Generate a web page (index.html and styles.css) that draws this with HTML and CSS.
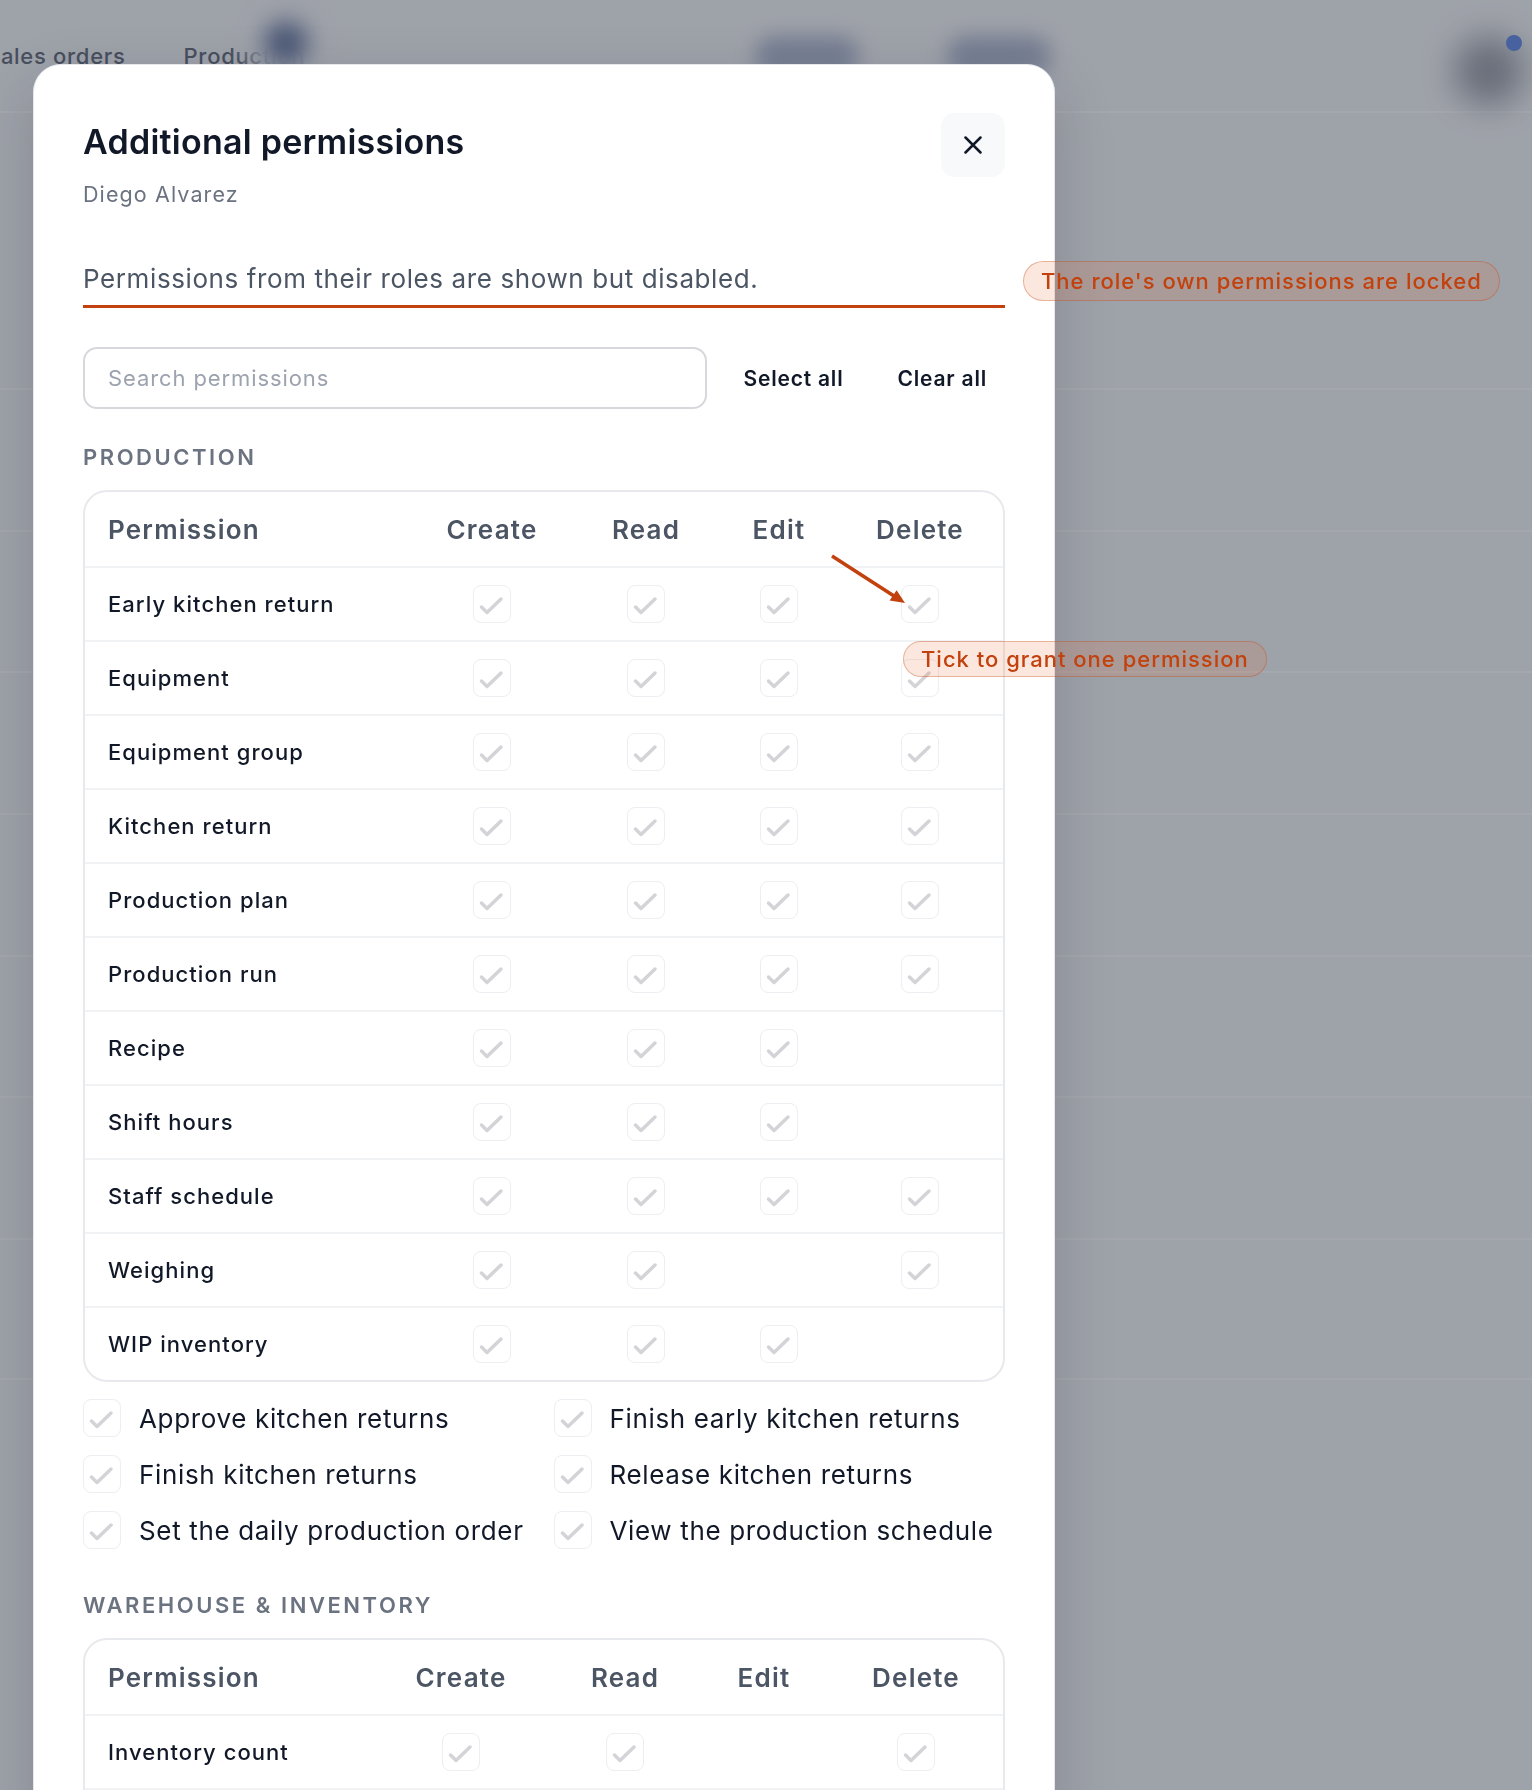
FILE: index.html
```html
<!DOCTYPE html>
<html lang="en">
<head>
  <meta charset="UTF-8" />
  <meta name="viewport" content="width=device-width, initial-scale=1.0"/>
  <title>Additional permissions</title>
  <link rel="stylesheet" href="styles.css">
</head>
<body>
  <!-- page behind the dialog, dimmed by the overlay -->
  <div class="app">
    <nav class="app-nav">
      <span class="nav-link first">Sales orders</span>
      <span class="nav-link">Production</span>
      <span class="ghost ghost-pop"></span>
      <span class="ghost ghost-btn one"></span>
      <span class="ghost ghost-btn two"></span>
      <span class="nav-user"><span class="ghost ghost-avatar"></span><span class="dot"></span></span>
    </nav>
    <div class="app-list">
      <div class="app-row"></div>
      <div class="app-row"></div>
      <div class="app-row"></div>
      <div class="app-row"></div>
      <div class="app-row"></div>
      <div class="app-row"></div>
      <div class="app-row"></div>
    </div>
  </div>

  <div class="overlay">
    <div class="modal">
      <div class="modal-head">
        <div>
          <h2 class="modal-title">Additional permissions</h2>
          <p class="modal-sub">Diego Alvarez</p>
        </div>
        <button class="close-btn" aria-label="Close">
          <svg width="18" height="18" viewBox="0 0 18 18"><path d="M1.5 1.5L16.5 16.5M16.5 1.5L1.5 16.5"/></svg>
        </button>
      </div>

      <p class="modal-note">Permissions from their roles are shown but disabled.</p>

      <div class="toolbar">
        <input class="search" type="text" placeholder="Search permissions">
        <button class="link-btn">Select all</button>
        <button class="link-btn">Clear all</button>
      </div>

      <h3 class="group-title">Production</h3>
      <div class="perm-table cols-a" id="production-table"></div>
      <div class="extra-list" id="production-extra"></div>

      <h3 class="group-title">Warehouse &amp; inventory</h3>
      <div class="perm-table cols-b" id="warehouse-table"></div>
    </div>

    <span class="hint hint-locked">The role's own permissions are locked</span>
    <svg class="hint-arrow" width="90" height="60" viewBox="0 0 90 60">
      <path class="arrow-line" d="M6 6L68 46"/>
      <path class="arrow-head" d="M79 53L63.6 50.6L70.6 40.2Z"/>
    </svg>
    <span class="hint hint-tick">Tick to grant one permission</span>
  </div>

  <script>
    const production = [
      ['Early kitchen return', 'CRED'],
      ['Equipment', 'CRED'],
      ['Equipment group', 'CRED'],
      ['Kitchen return', 'CRED'],
      ['Production plan', 'CRED'],
      ['Production run', 'CRED'],
      ['Recipe', 'CRE'],
      ['Shift hours', 'CRE'],
      ['Staff schedule', 'CRED'],
      ['Weighing', 'CRD'],
      ['WIP inventory', 'CRE']
    ];
    const productionExtra = [
      'Approve kitchen returns', 'Finish early kitchen returns',
      'Finish kitchen returns', 'Release kitchen returns',
      'Set the daily production order', 'View the production schedule'
    ];
    const warehouse = [
      ['Inventory count', 'CRD'],
      ['Stock transfer', 'CRED']
    ];

    function checkBox(){
      return '<span class="check"><svg width="35" height="35" viewBox="0 0 35 35"><path d="M7.5 21l5.5 5.5L27 13"/></svg></span>';
    }

    function renderTable(id, rows){
      const head = `
        <div class="perm-row perm-head">
          <span class="perm-name">Permission</span>
          <span class="perm-cell">Create</span><span class="perm-cell">Read</span>
          <span class="perm-cell">Edit</span><span class="perm-cell">Delete</span>
        </div>`;
      document.getElementById(id).innerHTML = head + rows.map(([name, ops]) => `
        <div class="perm-row">
          <span class="perm-name">${name}</span>
          ${'CRED'.split('').map(k => `<span class="perm-cell">${ops.includes(k) ? checkBox() : ''}</span>`).join('')}
        </div>`).join('');
    }

    function renderExtra(id, items){
      document.getElementById(id).innerHTML = items.map(t => `
        <label class="extra-item">${checkBox()}<span>${t}</span></label>`).join('');
    }

    renderTable('production-table', production);
    renderExtra('production-extra', productionExtra);
    renderTable('warehouse-table', warehouse);
  </script>
</body>
</html>
```

FILE: styles.css
```css
* { margin:0; padding:0; box-sizing:border-box; }
body { font-family:'Inter','Noto Sans',sans-serif; background:#f6f7f9; color:#111827; height:1790px; overflow:hidden; }
button { font-family:inherit; border:none; background:none; cursor:pointer; }

/* background app */
.app-nav { position:relative; height:113px; display:flex; align-items:center; border-bottom:2px solid #fff; }
.nav-link { font-size:22px; font-weight:500; letter-spacing:0.7px; color:#6b7280; margin-right:58px; white-space:nowrap; }
.nav-link.first { margin-left:-14px; }
.ghost { flex-shrink:0; filter:blur(10px); }
.ghost-pop { position:absolute; left:238px; top:0; width:96px; height:86px; border-radius:50%; background:radial-gradient(circle, #6a7aa3 0 15%, #f6f7f9 50%, rgba(246,247,249,0) 72%); }
.ghost-btn { width:104px; height:40px; border-radius:20px; background:#7f8db4; opacity:.55; }
.ghost-btn.one { margin-left:392px; }
.ghost-btn.two { margin-left:88px; }
.nav-user { margin-left:auto; position:relative; width:64px; height:64px; flex-shrink:0; }
.ghost-avatar { position:absolute; left:-14px; top:12px; width:70px; height:70px; border-radius:50%; background:#7d828f; filter:blur(16px); opacity:.7; }
.dot { position:absolute; left:38px; top:11px; width:16px; height:16px; border-radius:50%; background:#6b8fe8; }
.app-list { padding-top:275px; }
.app-row { height:141.7px; border-top:2px solid #fff; }
.app-row:last-child { border-bottom:2px solid #fff; }

/* dialog */
.overlay { position:fixed; inset:0; background:rgba(17,24,39,0.38); padding:64px 0 0 33px; overflow:hidden; }
.modal { width:1022px; background:white; border:1px solid #e5e7eb; border-radius:28px; padding:48px 49px 60px; box-shadow:0 20px 60px rgba(17,24,39,0.18); }
.modal-head { display:flex; justify-content:space-between; align-items:flex-start; }
.modal-title { font-size:34px; font-weight:600; line-height:41px; margin-top:8px; letter-spacing:0.25px; color:#111827; }
.modal-sub { font-size:21.5px; line-height:29px; margin-top:18px; letter-spacing:1.1px; color:#6b7280; }
.close-btn { width:64px; height:64px; border-radius:14px; background:#f8f9fb; display:flex; align-items:center; justify-content:center; }
.close-btn path { stroke:#111827; stroke-width:2.5; stroke-linecap:round; fill:none; }
.modal-note { margin-top:52px; font-size:26px; line-height:36px; letter-spacing:0.6px; color:#4b5563; padding-bottom:8px; border-bottom:3px solid #c2410c; }

.toolbar { margin-top:39px; display:flex; align-items:center; gap:18px; }
.search { flex:1; height:62px; border:2px solid #d6d8dc; border-radius:14px; padding:0 23px; font-family:inherit; font-size:22px; letter-spacing:0.9px; color:#111827; outline:none; }
.search::placeholder { color:#9ca3af; }
.link-btn { font-size:21px; font-weight:600; letter-spacing:0.8px; color:#111827; padding:0 18px; height:48px; }

.group-title { margin-top:33px; font-size:22px; line-height:31px; font-weight:600; color:#6b7280; text-transform:uppercase; letter-spacing:2.55px; }
.perm-table { margin-top:17px; border:2px solid #e8e9ec; border-radius:24px; overflow:hidden; }
.perm-row { display:grid; align-items:center; height:74px; border-top:2px solid #f1f2f4; }
.perm-head { border-top:none; }
.cols-a .perm-row { grid-template-columns:1fr 158px 150px 116px 166px; }
.cols-b .perm-row { grid-template-columns:1fr 180px 148px 130px 174px; }
.perm-name { padding-left:23px; font-size:22px; font-weight:500; letter-spacing:1.05px; color:#111827; }
.perm-cell { display:flex; justify-content:center; }
.perm-head span { font-size:26px; font-weight:600; letter-spacing:1.2px; color:#4b5563; }

.check { width:38px; height:38px; border:1.5px solid #eceef1; border-radius:8px; display:inline-flex; flex-shrink:0; }
.check path { fill:none; stroke:#d4d4d8; stroke-width:3.5; stroke-linecap:round; stroke-linejoin:round; }

.extra-list { margin-top:17px; display:grid; grid-template-columns:1fr 1fr; column-gap:19px; row-gap:18px; }
.extra-item { display:flex; align-items:center; gap:18px; font-size:26px; letter-spacing:0.65px; color:#111827; white-space:nowrap; }
.extra-list + .group-title { margin-top:41px; }
.group-title + .perm-table { margin-top:17px; }

/* annotation callouts */
.hint { position:absolute; font-size:22px; font-weight:500; line-height:28px; letter-spacing:1px; color:#c2410c; background:rgba(234,120,70,0.18); border:1.5px solid rgba(194,65,12,0.32); border-radius:999px; padding:5px 17px; white-space:nowrap; }
.hint-locked { left:1023px; top:261px; }
.hint-tick { left:903px; top:641px; padding:3px 17px; }
.hint-arrow { position:absolute; left:826px; top:550px; }
.arrow-line { stroke:#c2410c; stroke-width:3.5; fill:none; }
.arrow-head { fill:#c2410c; }
```
